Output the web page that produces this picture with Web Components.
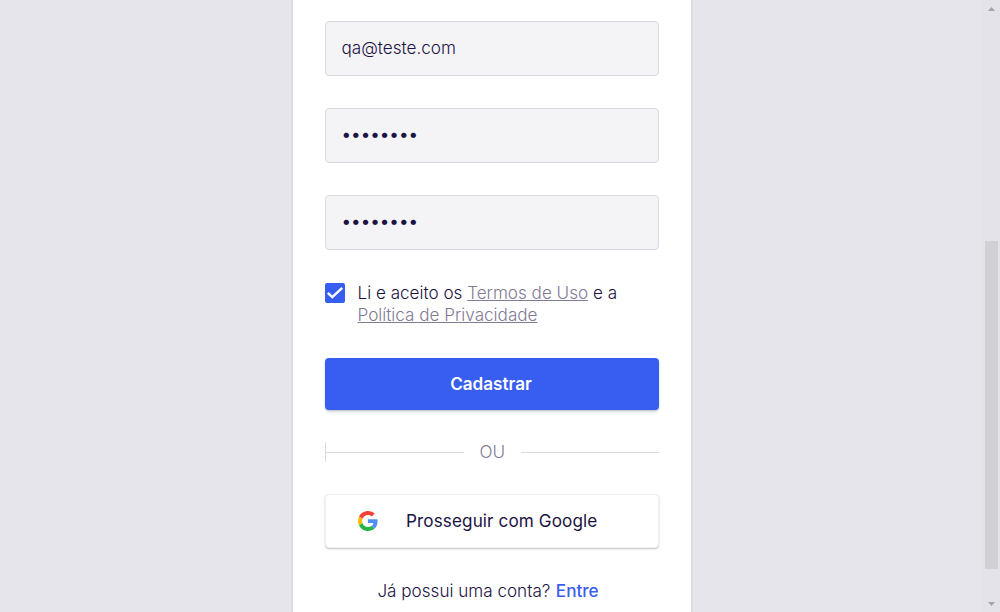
<!DOCTYPE html>
<html lang="pt-BR">
<head>
<meta charset="utf-8">
<title>Cadastro</title>
<style>
html,body{margin:0;height:100%;overflow:hidden}
body{font-family:Inter,"Liberation Sans",sans-serif;color:#1c1243}
</style>
</head>
<body>
<signup-page></signup-page>
<script>
const define=(name,html)=>customElements.define(name,class extends HTMLElement{
  constructor(){super();this.attachShadow({mode:'open'}).innerHTML=html;}
});

define('form-field',`<style>
  :host{display:block;box-sizing:border-box;height:55px;border:1px solid #d9d9e0;border-radius:4px;background:#f4f4f7;padding:0 15.5px}
  div{height:53px;line-height:51px;font-size:17.12px;font-weight:300;white-space:nowrap}
  :host([secret]) div{font-size:17px;font-weight:400;line-height:51px}
</style><div><slot></slot></div>`);

define('check-row',`<style>
  :host{display:flex;gap:12.5px;align-items:flex-start}
  .box{width:20px;height:20px;flex:none;margin-top:1px;border-radius:2px;background:#375ef0}
  svg{display:block}
  .label{font-size:17.1px;line-height:22px;font-weight:300}
</style><span class="box"><svg width="20" height="20" viewBox="0 0 20 20" fill="none" stroke="#fff" stroke-width="2.4"><path d="M2.8 9.9 7.3 14.2 17.2 4.9"/></svg></span><span class="label"><slot></slot></span>`);

define('text-link',`<style>
  :host{display:inline;color:#807a94;text-decoration:underline;text-decoration-thickness:1px;text-underline-offset:1px}
</style><slot></slot>`);

define('primary-button',`<style>
  :host{display:flex;align-items:center;justify-content:center;box-sizing:border-box;height:52px;padding:0 2px 2px 0;border-radius:4px;background:#375ef0;color:#fff;font-size:17.12px;font-weight:600;box-shadow:0 2px 3px rgba(0,0,0,.14),0 1px 1px rgba(0,0,0,.1)}
</style><slot></slot>`);

define('or-divider',`<style>
  :host{display:flex;align-items:center;height:20px;box-sizing:border-box;border-left:1px solid #d9d9e0;color:#807a94;font-size:17.12px;font-weight:300}
  i{height:1px;background:#d9d9e0;flex:1}
  i:first-child{flex:none;width:137px}
  span{padding:0 16px 0 15.5px;line-height:20px}
</style><i></i><span><slot></slot></span><i></i>`);

define('google-button',`<style>
  :host{display:flex;align-items:center;box-sizing:border-box;height:54px;padding-left:32px;border:1px solid #f0f0f2;border-radius:4px;background:#fff;font-size:17.12px;font-weight:400;letter-spacing:.11px;box-shadow:0 1px 2px rgba(0,0,0,.24)}
  svg{width:20px;height:20px;margin-right:28px}
  span{padding-bottom:2px}
</style><svg viewBox="0 0 48 48"><path fill="#f44336" d="M24 9.5c3.54 0 6.71 1.22 9.21 3.6l6.85-6.85C35.9 2.38 30.47 0 24 0 14.62 0 6.51 5.38 2.56 13.22l7.98 6.19C12.43 13.72 17.74 9.5 24 9.5z"/><path fill="#518ef8" d="M46.98 24.55c0-1.57-.15-3.09-.38-4.55H24v9.02h12.94c-.58 2.96-2.26 5.48-4.78 7.18l7.73 6c4.51-4.18 7.09-10.36 7.09-17.65z"/><path fill="#fbbb00" d="M10.53 28.59A14.5 14.5 0 0 1 9.77 24c0-1.6.27-3.14.76-4.59l-7.98-6.19A23.99 23.99 0 0 0 0 24c0 3.88.92 7.54 2.56 10.78l7.97-6.19z"/><path fill="#28b446" d="M24 48c6.48 0 11.93-2.13 15.89-5.81l-7.73-6c-2.15 1.45-4.92 2.3-8.16 2.3-6.26 0-11.57-4.22-13.47-9.91l-7.98 6.19C6.51 42.62 14.62 48 24 48z"/></svg><span><slot></slot></span>`);

define('login-hint',`<style>
  :host{display:flex;justify-content:center;gap:5.5px;padding-right:8px;font-size:17.1px;line-height:22px;font-weight:300}
  ::slotted(b){font-weight:500;color:#375ef0}
</style><slot></slot>`);

define('page-scrollbar',`<style>
  :host{display:flex;flex-direction:column;align-items:center;width:17px;flex:none;box-sizing:border-box;padding:7px 0 6px;background:#e3e3e9}
  .top{height:4px;flex:none}
  .thumb{width:13px;height:328px;margin-top:230px;background:#d0d0d5}
  .bottom{margin-top:auto;height:4px}
  svg{display:block;fill:#a3a3a9}
</style><svg class="top" width="7" height="4"><path d="M0 4 3.5 0 7 4z"/></svg><span class="thumb"></span><svg class="bottom" width="7" height="4"><path d="M0 0 3.5 4 7 0z"/></svg>`);

define('signup-card',`<style>
  :host{display:block;width:402px;height:612px;box-sizing:border-box;padding:21px 32px 0;border:solid #dcdce2;border-width:0 2px;background:#fff;margin-left:1px}
  ::slotted(*){margin-bottom:32px}
</style><slot></slot>`);

define('signup-page',`<style>
  :host{display:flex;height:612px;background:#e5e5eb}
  main{flex:1;display:flex;justify-content:center}
</style><main><signup-card>
  <form-field>qa@teste.com</form-field>
  <form-field secret>••••••••</form-field>
  <form-field secret>••••••••</form-field>
  <check-row>Li e aceito os <text-link>Termos de Uso</text-link> e a<br><text-link>Política de Privacidade</text-link></check-row>
  <primary-button>Cadastrar</primary-button>
  <or-divider>OU</or-divider>
  <google-button>Prosseguir com Google</google-button>
  <login-hint><span>Já possui uma conta?</span><b>Entre</b></login-hint>
</signup-card></main><page-scrollbar></page-scrollbar>`);
</script>
</body>
</html>
